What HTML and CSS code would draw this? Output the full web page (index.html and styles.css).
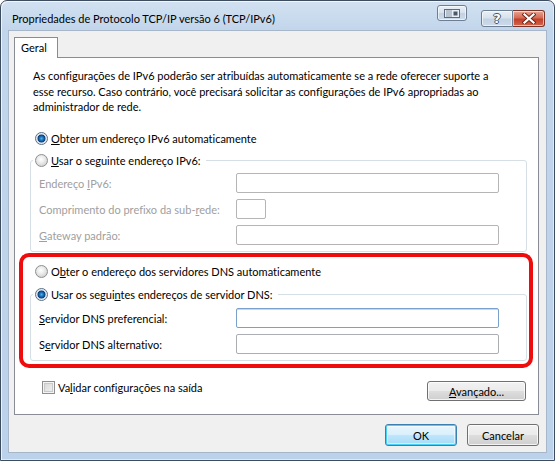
FILE: index.html
```html
<!DOCTYPE html>
<html lang="pt-BR">
<head>
  <meta charset="UTF-8" />
  <title>Propriedades de Protocolo TCP/IP versão 6 (TCP/IPv6)</title>
  <link rel="stylesheet" href="styles.css">
</head>
<body>

  <div class="window">
    <div class="titlebar">
      <span class="title">Propriedades de Protocolo TCP/IP versão 6 (TCP/IPv6)</span>
      <span class="tb-btn tb-extra">
        <svg width="16" height="9" viewBox="0 0 16 9">
          <rect x="0.5" y="0.5" width="15" height="8" fill="#e8eef5" stroke="#5d6b7c"/>
          <path d="M3 1v7M5 1v7M7 1v7" stroke="#8a97a8" stroke-width="1"/>
          <rect x="9.5" y="2.5" width="4" height="4" fill="#4a5868"/>
        </svg>
      </span>
      <span class="tb-btn tb-help">?</span>
      <span class="tb-btn tb-close">
        <svg width="14" height="11" viewBox="0 0 14 11">
          <path d="M2.5 1.5l9 8M11.5 1.5l-9 8" stroke="#6b2418" stroke-width="4" stroke-linecap="square"/>
          <path d="M2.5 1.5l9 8M11.5 1.5l-9 8" stroke="#fff" stroke-width="2.2" stroke-linecap="square"/>
        </svg>
      </span>
    </div>

    <div class="client">
      <div class="tabs"><span class="tab">Geral</span></div>

      <div class="panel">
        <p class="intro">
          As configurações de IPv6 poderão ser atribuídas automaticamente se a rede oferecer suporte a<br>
          esse recurso. Caso contrário, você precisará solicitar as configurações de IPv6 apropriadas ao<br>
          administrador de rede.
        </p>

        <label class="opt first"><span class="radio on"></span><span><u>O</u>bter um endereço IPv6 automaticamente</span></label>

        <fieldset class="group">
          <legend class="opt"><span class="radio"></span><span><u>U</u>sar o seguinte endereço IPv6:</span></legend>
          <div class="field off">
            <span class="lbl">Endereço <u>I</u>Pv6:</span>
            <input class="box" type="text" disabled>
          </div>
          <div class="field off">
            <span class="lbl">Comprimento do prefixo da sub-<u>r</u>ede:</span>
            <input class="box short" type="text" disabled>
          </div>
          <div class="field off">
            <span class="lbl"><u>G</u>ateway padrão:</span>
            <input class="box" type="text" disabled>
          </div>
        </fieldset>

        <div class="dns">
          <label class="opt"><span class="radio"></span><span>O<u>b</u>ter o endereço dos servidores DNS automaticamente</span></label>
          <fieldset class="group">
            <legend class="opt"><span class="radio on"></span><span>Usar os segui<u>n</u>tes endereços de servidor DNS:</span></legend>
            <div class="field">
              <span class="lbl"><u>S</u>ervidor DNS preferencial:</span>
              <input class="box hot" type="text">
            </div>
            <div class="field">
              <span class="lbl">S<u>e</u>rvidor DNS alternativo:</span>
              <input class="box" type="text">
            </div>
          </fieldset>
        </div>

        <div class="bottom-row">
          <label class="check"><span class="checkbox"></span><span>Va<u>l</u>idar configurações na saída</span></label>
          <button class="btn adv"><u>A</u>vançado...</button>
        </div>
      </div>

      <div class="actions">
        <button class="btn default">OK</button>
        <button class="btn">Cancelar</button>
      </div>
    </div>
  </div>

</body>
</html>
```

FILE: styles.css
```css
* {
  margin: 0;
  padding: 0;
  box-sizing: border-box;
}

html, body {
  width: 555px;
  height: 461px;
  overflow: hidden;
  background: #ffffff;
}

body {
  font-family: 'Lato', 'Noto Sans', sans-serif;
  font-size: 11px;
  font-variant-ligatures: none;
  color: #000;
}

u {
  text-decoration: underline;
  text-underline-offset: 1px;
}

.window {
  width: 555px;
  height: 461px;
  border: 1px solid #3d4c5e;
  border-radius: 7px 7px 0 0;
  padding: 0 7px 7px 7px;
  background: linear-gradient(180deg, #d2e1f1 0, #c1d5eb 30px, #bcd2ea 100%);
  box-shadow: inset 1px 1px 0 rgba(255, 255, 255, 0.7), inset -1px -1px 0 rgba(255, 255, 255, 0.5);
  display: flex;
  flex-direction: column;
}

/* title bar */
.titlebar {
  height: 29px;
  display: flex;
  align-items: flex-start;
  padding: 0 2px 0 4px;
}

.title {
  margin-top: 10px;
  font-size: 11px;
  line-height: 16px;
  color: #000;
  white-space: nowrap;
}

.tb-btn {
  display: flex;
  align-items: center;
  justify-content: center;
  border: 1px solid #6f7f93;
  background: linear-gradient(180deg, #e9eff6 0, #d7e2ee 48%, #c3d2e3 52%, #ccdbeb 100%);
  box-shadow: inset 0 0 0 1px rgba(255, 255, 255, 0.6);
}

.tb-extra {
  margin-left: auto;
  margin-top: 4px;
  width: 30px;
  height: 16px;
  border-radius: 3px;
}

.tb-help {
  margin-left: 14px;
  margin-top: 9px;
  width: 32px;
  height: 17px;
  border-radius: 3px 0 0 3px;
  font-family: 'DejaVu Sans', sans-serif;
  font-weight: bold;
  font-size: 13px;
  color: #fff;
  text-shadow: 1px 0 0 #45556a, -1px 0 0 #45556a, 0 1px 0 #45556a, 0 -1px 0 #45556a;
}

.tb-close {
  margin-top: 9px;
  width: 32px;
  height: 17px;
  border-radius: 0 3px 3px 0;
  border-color: #7a3326;
  border-left: none;
  background: linear-gradient(180deg, #e6a596 0, #d76a55 45%, #c2402a 55%, #d4664c 100%);
}

/* client area */
.client {
  flex: 1;
  background: #f0f0f0;
  border: 1px solid #a7b6c8;
  padding: 6px 7px 6px 5px;
  display: flex;
  flex-direction: column;
}

.tabs {
  display: flex;
}

.tab {
  position: relative;
  z-index: 1;
  width: 44px;
  height: 21px;
  margin-bottom: -1px;
  padding: 3px 0 0 6px;
  background: #fff;
  border: 1px solid #898c95;
  border-bottom: none;
}

.panel {
  height: 358px;
  background: #fff;
  border: 1px solid #898c95;
  padding: 0 11px 0 15px;
}

.intro {
  margin: 10px 0 0 3px;
  line-height: 15.5px;
  white-space: nowrap;
}

.opt {
  display: flex;
  align-items: center;
  height: 16px;
  gap: 3px;
  white-space: nowrap;
}

.opt.first {
  margin: 15.5px 0 0 5px;
}

.radio {
  flex: none;
  width: 13px;
  height: 13px;
  border-radius: 50%;
  border: 1px solid #8e8f8f;
  background: radial-gradient(circle at 45% 40%, #ffffff 0, #eeeeee 35%, #d4d4d4 75%, #c4c4c4 100%);
}

.radio.on {
  border-color: #5a6f85;
  background: radial-gradient(circle at 50% 50%, #4fb4ec 0, #1c6fb8 2px, #0d3f78 3.6px, #c8d6e4 4.3px, #f6f6f6 5.5px);
}

.group {
  margin-top: 6px;
  border: 1px solid #d5dfe5;
  border-radius: 3px;
  padding: 0 0 6px 0;
}

.group legend {
  margin-left: 2px;
  padding: 0 5px 0 2px;
}

.field {
  display: flex;
  align-items: center;
  height: 20px;
  margin: 6px 0 0 8px;
}

.group > legend + .field {
  margin-top: 5px;
}

.lbl {
  width: 197px;
  white-space: nowrap;
}

.field.off .lbl {
  color: #a0a0a0;
}

.box {
  width: 263px;
  height: 20px;
  border: 1px solid #abadb3;
  border-radius: 2px;
  background: #fff;
  font: inherit;
  outline: none;
}

.field.off .box {
  border-color: #b5b5b5;
  background: #fff;
}

.box.short {
  width: 30px;
}

.box.hot {
  border-color: #7aa1c9;
  box-shadow: inset 0 1px 0 #c5d7ea;
}

/* annotation around the DNS block */
.dns {
  margin: 1px -6px 0 -11px;
  border: 4px solid #ee0c0c;
  border-radius: 10px;
  padding: 6px 2px 3px 7px;
}

.dns > .opt {
  margin-left: 5px;
}

.dns .group {
  margin-top: 7px;
}

.dns .group > legend + .field {
  margin-top: 6px;
}

.bottom-row {
  display: flex;
  align-items: flex-start;
  margin-top: 13px;
}

.check {
  display: flex;
  align-items: center;
  gap: 3px;
  margin-left: 12px;
  height: 13px;
  white-space: nowrap;
}

.checkbox {
  width: 13px;
  height: 13px;
  border: 1px solid #8e8f8f;
  background: linear-gradient(135deg, #d5d5d5 0, #f4f4f4 100%);
  box-shadow: inset 0 0 0 1px #f4f4f4, inset 0 0 0 2px #c9c9c9;
}

.btn {
  height: 22px;
  width: 72px;
  border: 1px solid #707070;
  border-radius: 3px;
  background: linear-gradient(180deg, #f2f2f2 0, #ebebeb 48%, #dddddd 52%, #cfcfcf 100%);
  box-shadow: inset 0 0 0 1px rgba(255, 255, 255, 0.75);
  font-family: inherit;
  font-size: 11px;
  font-variant-ligatures: none;
  color: #000;
}

.btn.adv {
  margin-left: auto;
  margin-right: 1px;
  width: 99px;
  height: 20px;
}

.btn.default {
  border-color: #3c7fb1;
  background: linear-gradient(180deg, #eaf6fd 0, #d9f0fc 48%, #bee6fd 52%, #a7d9f5 100%);
  box-shadow: inset 0 0 0 1px #48d0f7, inset 0 0 0 2px rgba(255, 255, 255, 0.5);
}

.actions {
  display: flex;
  justify-content: flex-end;
  gap: 10px;
  margin-top: 9px;
}
```
